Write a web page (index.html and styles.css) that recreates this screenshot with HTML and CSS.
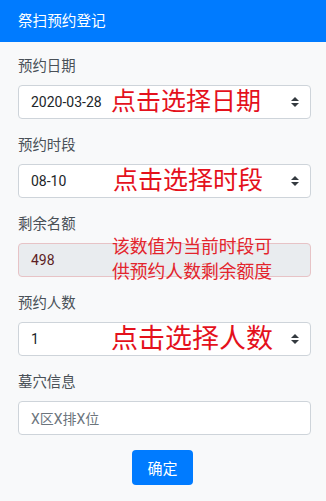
FILE: index.html
```html
<!DOCTYPE html>
<html lang="zh-CN">
<head>
<meta charset="utf-8">
<title>祭扫预约登记</title>
<link rel="stylesheet" href="styles.css">
</head>
<body>
<header class="topbar">祭扫预约登记</header>
<main class="form">
  <div class="group">
    <label class="label">预约日期</label>
    <div class="field select">
      <span class="value">2020-03-28</span>
      <span class="note note-date">点击选择日期</span>
      <svg class="caret" viewBox="0 0 4 5" width="8" height="10"><path d="M2 0L0 2h4zm0 5L0 3h4z" fill="#343a40"/></svg>
    </div>
  </div>
  <div class="group">
    <label class="label">预约时段</label>
    <div class="field select">
      <span class="value">08-10</span>
      <span class="note note-time">点击选择时段</span>
      <svg class="caret" viewBox="0 0 4 5" width="8" height="10"><path d="M2 0L0 2h4zm0 5L0 3h4z" fill="#343a40"/></svg>
    </div>
  </div>
  <div class="group">
    <label class="label">剩余名额</label>
    <div class="field disabled">
      <span class="value">498</span>
      <span class="note note-quota">该数值为当前时段可<br>供预约人数剩余额度</span>
    </div>
  </div>
  <div class="group">
    <label class="label">预约人数</label>
    <div class="field select">
      <span class="value">1</span>
      <span class="note note-count">点击选择人数</span>
      <svg class="caret" viewBox="0 0 4 5" width="8" height="10"><path d="M2 0L0 2h4zm0 5L0 3h4z" fill="#343a40"/></svg>
    </div>
  </div>
  <div class="group last">
    <label class="label">墓穴信息</label>
    <div class="field">
      <span class="placeholder">X区X排X位</span>
    </div>
  </div>
  <div class="actions">
    <button class="btn">确定</button>
  </div>
</main>
</body>
</html>
```
FILE: styles.css
```css
* { box-sizing: border-box; }
html, body {
  margin: 0;
  padding: 0;
  background: #f8f9fa;
  font-family: Roboto, "Noto Sans CJK SC", "Noto Sans", sans-serif;
  color: #212529;
}
.topbar {
  height: 42px;
  line-height: 42px;
  padding-left: 18px;
  background: #007bff;
  color: #fff;
  font-size: 14.6px;
}
.form {
  padding: 14px 15px 0 18px;
}
.group {
  margin-bottom: 16px;
}
.group.last {
  margin-bottom: 15px;
}
.label {
  display: block;
  font-size: 14.4px;
  line-height: 21px;
  margin-bottom: 8px;
  color: #495057;
}
.field {
  position: relative;
  display: flex;
  align-items: center;
  height: 34px;
  padding: 0 12px;
  background: #fff;
  border: 1px solid #ced4da;
  border-radius: 4px;
  font-size: 14px;
}
.field.disabled {
  background: #e9ecef;
  border-color: #e7c3c6;
}
.field.disabled .value {
  color: #5c1e24;
}
.value {
  color: #212529;
}
.placeholder {
  color: #6c757d;
  font-size: 14px;
}
.caret {
  position: absolute;
  right: 11px;
  top: 11px;
}
.note {
  position: absolute;
  color: #e4111c;
  white-space: nowrap;
}
.note-date {
  left: 92px;
  top: 50%;
  transform: translateY(-50%);
  font-size: 25px;
  line-height: 30px;
}
.note-time {
  left: 94px;
  top: 50%;
  transform: translateY(-50%);
  font-size: 25px;
  line-height: 30px;
}
.note-count {
  left: 92px;
  top: 50%;
  transform: translateY(-50%);
  font-size: 27px;
  line-height: 32px;
}
.note-quota {
  left: 93px;
  top: -10px;
  font-size: 17.8px;
  line-height: 25px;
  color: #e3242c;
}
.actions {
  display: flex;
  justify-content: center;
  padding-right: 4px;
}
.btn {
  width: 61px;
  height: 35px;
  border: 0;
  border-radius: 4px;
  background: #007bff;
  color: #fff;
  font-family: Roboto, "Noto Sans CJK SC", sans-serif;
  font-size: 15px;
  padding: 0;
}
```
